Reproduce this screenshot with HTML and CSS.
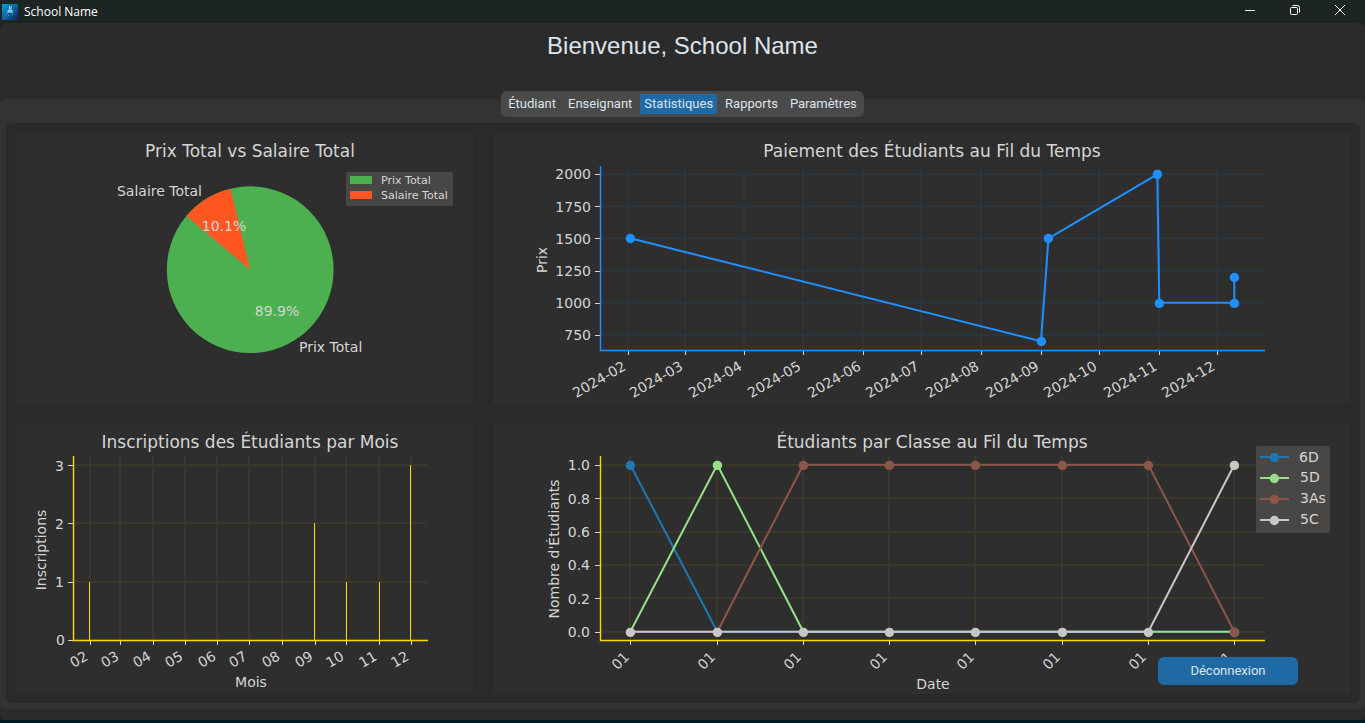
FILE: index.html
```html
<!DOCTYPE html>
<html lang="fr">
<head>
<meta charset="utf-8">
<meta name="viewport" content="width=device-width, initial-scale=1">
<title>School Name</title>
<link rel="stylesheet" href="styles.css">
</head>
<body>
<header class="titlebar">
  <svg class="app-icon" viewBox="0 0 16 16" aria-hidden="true">
    <defs><linearGradient id="appBg" x1="0" y1="0" x2="1" y2="1"><stop offset="0" stop-color="#0a9fe0"/><stop offset=".5" stop-color="#0b679f"/><stop offset="1" stop-color="#131f52"/></linearGradient></defs>
    <rect width="16" height="16" fill="url(#appBg)"/>
    <path d="M7.500 2v3M9.500 2L8.500 5" stroke="#a5dcf2" fill="none"/>
    <path d="M6 5.500h4l1 3.500H9.500L8 8 6.500 9H5z" fill="#8fc6e2"/>
    <path d="M4 10.500h1M10 10.500h1M6 11.500h1" stroke="#4f9fc9" fill="none"/>
  </svg>
  <span class="app-name">School Name</span>
  <div class="window-controls">
    <button type="button" class="control" aria-label="Réduire"><svg viewBox="0 0 10 10"><path d="M0 5.500h10"/></svg></button>
    <button type="button" class="control" aria-label="Restaurer"><svg viewBox="0 0 10 10"><rect x=".5" y="2.500" width="7" height="7" rx="1"/><path d="M2.500 .5h5a2 2 0 0 1 2 2v5"/></svg></button>
    <button type="button" class="control" aria-label="Fermer"><svg viewBox="0 0 10 10"><path d="M0 0l10 10M10 0L0 10"/></svg></button>
  </div>
</header>
<main class="window">
  <h1 class="welcome">Bienvenue, School Name</h1>
  <nav class="tabs" aria-label="Sections">
    <button type="button" class="tab">Étudiant</button>
    <button type="button" class="tab">Enseignant</button>
    <button type="button" class="tab tab-active" aria-current="page">Statistiques</button>
    <button type="button" class="tab">Rapports</button>
    <button type="button" class="tab">Paramètres</button>
  </nav>
  <section class="panel">
    <div class="charts">
      <svg class="chart" viewBox="16 133 457 271" role="img" aria-label="Prix Total vs Salaire Total">
        <text class="chart-title" x="250" y="157">Prix Total vs Salaire Total</text>
        <circle cx="250.200" cy="269.700" r="83.400" fill="#4caf50"/>
        <path d="M250.200 269.700L186.300 216.100A83.400 83.400 0 0 1 230.500 188.700Z" fill="#ff5722"/>
        <text class="end" x="202" y="196">Salaire Total</text>
        <text x="299" y="352">Prix Total</text>
        <text class="mid" x="224" y="231">10.1%</text>
        <text class="mid" x="277" y="316">89.9%</text>
        <rect class="legend-box" x="346" y="172" width="107" height="34" rx="2"/>
        <rect x="350" y="176" width="22" height="8" fill="#4caf50"/>
        <rect x="350" y="191" width="22" height="8" fill="#ff5722"/>
        <text class="small" x="381" y="184">Prix Total</text>
        <text class="small" x="381" y="199">Salaire Total</text>
      </svg>

      <svg class="chart" viewBox="493 133 857 271" role="img" aria-label="Paiement des Étudiants au Fil du Temps">
        <text class="chart-title" x="932" y="157">Paiement des Étudiants au Fil du Temps</text>
        <path class="grid grid-blue" d="M628 166V350M685 166V350M744 166V350M803 166V350M863 166V350M921 166V350M981 166V350M1041 166V350M1099 166V350M1159 166V350M1217 166V350M601 174H1264M601 206H1264M601 238H1264M601 271H1264M601 303H1264M601 335H1264"/>
        <path class="tick" d="M628.500 351v4M685.500 351v4M744.500 351v4M803.500 351v4M863.500 351v4M921.500 351v4M981.500 351v4M1041.500 351v4M1099.500 351v4M1159.500 351v4M1217.500 351v4M595 174.500h5M595 206.500h5M595 238.500h5M595 271.500h5M595 303.500h5M595 335.500h5"/>
        <path class="axis axis-blue" d="M600.500 166V350.500H1265"/>
        <polyline class="series" stroke="#1e90ff" points="630.300,238.300 1041,341.300 1048.500,238.300 1157.300,174.300 1159.300,302.700 1234.300,302.700 1234.300,277.300"/>
        <g fill="#1e90ff"><circle cx="630.400" cy="238.500" r="4.700"/><circle cx="1041.400" cy="341.500" r="4.700"/><circle cx="1048.400" cy="238.500" r="4.700"/><circle cx="1157.400" cy="174.400" r="4.700"/><circle cx="1159.400" cy="303.400" r="4.700"/><circle cx="1234.400" cy="303.400" r="4.700"/><circle cx="1234.400" cy="277.500" r="4.700"/></g>
        <g class="end">
          <text x="591" y="179">2000</text><text x="591" y="212">1750</text><text x="591" y="244">1500</text><text x="591" y="276">1250</text><text x="591" y="308">1000</text><text x="591" y="340">750</text>
          <text transform="translate(627 369) rotate(-30)">2024-02</text>
          <text transform="translate(684 369) rotate(-30)">2024-03</text>
          <text transform="translate(743 369) rotate(-30)">2024-04</text>
          <text transform="translate(802 369) rotate(-30)">2024-05</text>
          <text transform="translate(862 369) rotate(-30)">2024-06</text>
          <text transform="translate(920 369) rotate(-30)">2024-07</text>
          <text transform="translate(980 369) rotate(-30)">2024-08</text>
          <text transform="translate(1040 369) rotate(-30)">2024-09</text>
          <text transform="translate(1098 369) rotate(-30)">2024-10</text>
          <text transform="translate(1158 369) rotate(-30)">2024-11</text>
          <text transform="translate(1216 369) rotate(-30)">2024-12</text>
        </g>
        <text class="mid" transform="translate(547 260) rotate(-90)">Prix</text>
      </svg>

      <svg class="chart" viewBox="16 424 457 270" role="img" aria-label="Inscriptions des Étudiants par Mois">
        <text class="chart-title" x="250" y="448">Inscriptions des Étudiants par Mois</text>
        <path class="grid grid-gold" d="M74 456V640M90 456V640M120 456V640M153 456V640M185 456V640M217 456V640M249 456V640M282 456V640M315 456V640M346 456V640M379 456V640M411 456V640M74 465H427M74 523H427M74 582H427M74 640H427"/>
        <path class="tick" d="M90.500 641v4M120.500 641v4M153.500 641v4M185.500 641v4M217.500 641v4M249.500 641v4M282.500 641v4M315.500 641v4M346.500 641v4M379.500 641v4M411.500 641v4M68 465.500h5M68 523.500h5M68 582.500h5M68 640.500h5"/>
        <path class="bar" d="M89.500 582V640M314.500 523V640M346.500 582V640M379.500 582V640M410.500 465V640"/>
        <path class="axis axis-gold" d="M73.500 456V640.500H428"/>
        <g class="end">
          <text x="64" y="471">3</text><text x="64" y="529">2</text><text x="64" y="587">1</text><text x="65" y="645">0</text>
          <text transform="translate(89 659) rotate(-30)">02</text>
          <text transform="translate(120 659) rotate(-30)">03</text>
          <text transform="translate(152 659) rotate(-30)">04</text>
          <text transform="translate(184 659) rotate(-30)">05</text>
          <text transform="translate(217 659) rotate(-30)">06</text>
          <text transform="translate(248 659) rotate(-30)">07</text>
          <text transform="translate(281 659) rotate(-30)">08</text>
          <text transform="translate(314 659) rotate(-30)">09</text>
          <text transform="translate(345 659) rotate(-30)">10</text>
          <text transform="translate(378 659) rotate(-30)">11</text>
          <text transform="translate(410 659) rotate(-30)">12</text>
        </g>
        <text class="mid" x="251" y="687">Mois</text>
        <text class="mid" transform="translate(46 550) rotate(-90)">Inscriptions</text>
      </svg>

      <svg class="chart" viewBox="493 424 857 270" role="img" aria-label="Étudiants par Classe au Fil du Temps">
        <text class="chart-title" x="932" y="448">Étudiants par Classe au Fil du Temps</text>
        <path class="grid grid-gold" d="M630 456V640M717 456V640M803 456V640M889 456V640M975 456V640M1062 456V640M1148 456V640M1234 456V640M601 465H1264M601 498H1264M601 532H1264M601 565H1264M601 598H1264M601 632H1264"/>
        <path class="tick" d="M630.500 641v4M717.500 641v4M803.500 641v4M889.500 641v4M975.500 641v4M1062.500 641v4M1148.500 641v4M1234.500 641v4M595 465.500h5M595 498.500h5M595 532.500h5M595 565.500h5M595 598.500h5M595 632.500h5"/>
        <path class="axis axis-gold" d="M600.500 456V640.500H1265"/>
        <polyline class="series" stroke="#1f77b4" points="630.300,464.700 717.300,631.700 1234.300,631.700"/>
        <g fill="#1f77b4"><circle cx="630.400" cy="465.400" r="4.700"/></g>
        <polyline class="series" stroke="#98df8a" points="630.300,631.700 717.300,464.700 803.300,631.700 1234.300,631.700"/>
        <g fill="#98df8a"><circle cx="717.400" cy="465.400" r="4.700"/><circle cx="1234.400" cy="632.400" r="4.700"/></g>
        <polyline class="series" stroke="#8c564b" points="630.300,631.700 717.300,631.700 803.300,464.700 1148.300,464.700 1234.300,631.700"/>
        <g fill="#8c564b"><circle cx="803.400" cy="465.400" r="4.700"/><circle cx="889.400" cy="465.400" r="4.700"/><circle cx="975.400" cy="465.400" r="4.700"/><circle cx="1062.400" cy="465.400" r="4.700"/><circle cx="1148.400" cy="465.400" r="4.700"/><circle cx="1234.400" cy="632.400" r="4.700"/></g>
        <polyline class="series" stroke="#c7c7c7" points="630.300,631.700 1148.300,631.700 1234.300,464.700"/>
        <g fill="#c7c7c7"><circle cx="630.400" cy="632.400" r="4.700"/><circle cx="717.400" cy="632.400" r="4.700"/><circle cx="803.400" cy="632.400" r="4.700"/><circle cx="889.400" cy="632.400" r="4.700"/><circle cx="975.400" cy="632.400" r="4.700"/><circle cx="1062.400" cy="632.400" r="4.700"/><circle cx="1148.400" cy="632.400" r="4.700"/><circle cx="1234.400" cy="465.400" r="4.700"/></g>
        <g class="end">
          <text x="590" y="470">1.0</text><text x="590" y="504">0.8</text><text x="590" y="537">0.6</text><text x="590" y="570">0.4</text><text x="590" y="604">0.2</text><text x="590" y="637">0.0</text>
          <text transform="translate(630 658) rotate(-45)">01</text>
          <text transform="translate(716 658) rotate(-45)">01</text>
          <text transform="translate(802 658) rotate(-45)">01</text>
          <text transform="translate(888 658) rotate(-45)">01</text>
          <text transform="translate(975 658) rotate(-45)">01</text>
          <text transform="translate(1061 658) rotate(-45)">01</text>
          <text transform="translate(1147 658) rotate(-45)">01</text>
          <text transform="translate(1233 658) rotate(-45)">01</text>
        </g>
        <text class="mid" x="933" y="689">Date</text>
        <text class="mid" transform="translate(559 549) rotate(-90)">Nombre d'Étudiants</text>
        <rect class="legend-box" x="1256" y="446" width="74" height="87" rx="2"/>
        <g stroke-width="2">
          <path d="M1260 457h29" stroke="#1f77b4"/><path d="M1260 478h29" stroke="#98df8a"/><path d="M1260 499h29" stroke="#8c564b"/><path d="M1260 520h29" stroke="#c7c7c7"/>
        </g>
        <circle cx="1274.400" cy="457.500" r="4.700" fill="#1f77b4"/><circle cx="1274.400" cy="478.500" r="4.700" fill="#98df8a"/><circle cx="1274.400" cy="499.500" r="4.700" fill="#8c564b"/><circle cx="1274.400" cy="520.500" r="4.700" fill="#c7c7c7"/>
        <text x="1299" y="462">6D</text><text x="1300" y="482">5D</text><text x="1300" y="503">3As</text><text x="1300" y="524">5C</text>
      </svg>
    </div>
  </section>
  <button type="button" class="logout">Déconnexion</button>
</main>
</body>
</html>
```
FILE: styles.css
```css
* { box-sizing: border-box; }

body {
  margin: 0;
  background: #1c2523;
  border-bottom: 3px solid #00191f;
  font-family: Roboto, "Liberation Sans", sans-serif;
}

button {
  border: 0;
  padding: 0;
  font: inherit;
  color: inherit;
  background: none;
}

.titlebar {
  display: flex;
  align-items: center;
  height: 23px;
  padding: 0 3px 0 2px;
  color: #fff;
}

.app-icon { width: 16px; height: 16px; }

.app-name {
  margin-left: 6px;
  font: 12px/20px "Open Sans", "Noto Sans", sans-serif;
}

.window-controls {
  display: flex;
  align-self: flex-start;
  margin-left: auto;
}

.control {
  display: flex;
  align-items: center;
  justify-content: center;
  width: 45px;
  height: 20px;
}

.control svg {
  width: 10px;
  height: 10px;
  fill: none;
  stroke: #fff;
  overflow: visible;
}

.window {
  position: relative;
  display: flex;
  flex-direction: column;
  padding-bottom: 11px;
  border-radius: 6px;
  background: #2b2b2b;
}

.welcome {
  margin: 0;
  padding: 9px 0 31px;
  font: 24px/28px "Liberation Sans", Arial, sans-serif;
  text-align: center;
  color: #dce4ee;
}

.tabs {
  position: relative;
  z-index: 1;
  display: flex;
  align-self: center;
  gap: 4px;
  padding: 3px;
  margin-bottom: -18px;
  border-radius: 6px;
  background: #4a4a4a;
}

.tab {
  height: 20px;
  padding: 0 4px;
  border-radius: 2px;
  font-size: 13px;
  line-height: 20px;
  color: #dce4ee;
}

.tab-active { background: #1f6aa5; }

.panel {
  padding: 24px 5px 6px 6px;
  border-radius: 6px;
  background: #333;
}

.charts {
  display: grid;
  grid-template-columns: 457fr 857fr;
  gap: 20px;
  padding: 10px 10px 9px;
  border-radius: 6px;
  background: #2a2a2a;
}

.chart {
  display: block;
  width: 100%;
  height: auto;
  background: #2e2e2e;
  font-family: "DejaVu Sans", sans-serif;
  font-size: 14px;
  fill: none;
}

.chart text { fill: #d5d5d5; }
.chart .chart-title { font-size: 17px; text-anchor: middle; }
.chart .small { font-size: 11px; }
.mid { text-anchor: middle; }
.end { text-anchor: end; }

.grid { stroke-width: 2; }
.grid-blue { stroke: #1e90ff; stroke-opacity: .08; }
.grid-gold { stroke: #ffd700; stroke-opacity: .06; }
.tick { stroke: #d5d5d5; }
.bar { stroke: #ffd700; }
.axis { stroke-width: 1.4; }
.axis-blue { stroke: #1e90ff; }
.axis-gold { stroke: #ffd700; }
.series { stroke-width: 2; stroke-linejoin: round; }
.legend-box { fill: #494745; }

.logout {
  position: absolute;
  right: 67px;
  bottom: 35px;
  width: 140px;
  height: 28px;
  padding-bottom: 2px;
  border-radius: 6px;
  font-size: 13px;
  color: #dce4ee;
  background: #1f6aa5;
}
```
